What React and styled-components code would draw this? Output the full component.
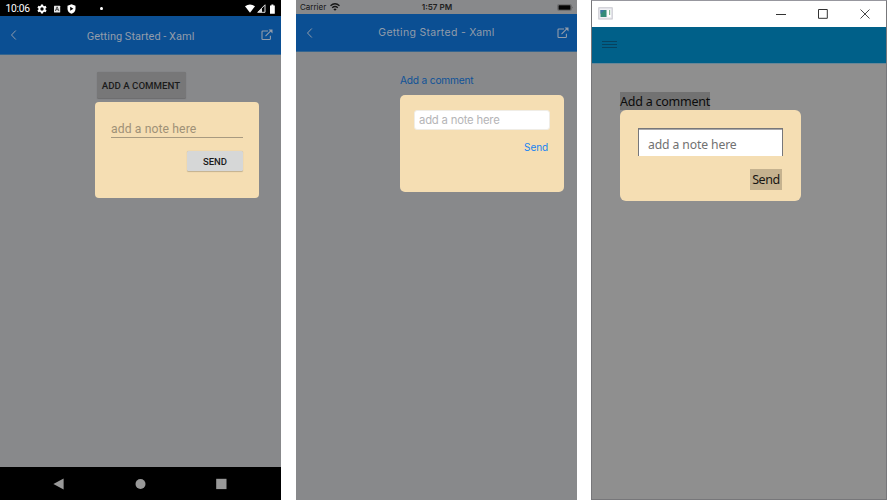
import React from "react";
import styled, { createGlobalStyle } from "styled-components";

const GlobalStyle = createGlobalStyle`
  *, *::before, *::after { box-sizing: border-box; }
  body { margin: 0; background: #fff; overflow: hidden; }
`;

const roboto = `Roboto, sans-serif`;
const inter = `Inter, sans-serif`;
const noto = `"Noto Sans", sans-serif`;

const Stage = styled.main`
  display: flex;
  width: 888px;
  height: 500px;
  background: #fff;
`;

const Phone = styled.section`
  display: flex;
  flex-direction: column;
  width: 281px;
  height: 500px;
  margin-right: ${(p) => p.$gap}px;
  background: #88898b;
  font-family: ${(p) => p.$font};
`;

const Text = styled.span`
  font-size: ${(p) => p.$size}px;
  font-weight: ${(p) => p.$weight || 400};
  letter-spacing: ${(p) => p.$track || 0}px;
  color: ${(p) => p.$color};
  line-height: 1;
  white-space: nowrap;
`;

const Title = styled(Text)`
  padding: 2px 2px 0 0;
`;

const Glyph = styled.svg`
  display: block;
  flex: none;
`;

const AndroidStatus = styled.div`
  display: flex;
  align-items: center;
  height: 16px;
  padding: 1px 4px 0 5.5px;
  background: #000;
`;

const StatusIcons = styled.div`
  display: flex;
  align-items: center;
  gap: ${(p) => p.$gap}px;
  margin-left: ${(p) => p.$left}px;
`;

const Dot = styled.i`
  width: 3px;
  height: 3px;
  margin-left: 24px;
  border-radius: 50%;
  background: #fff;
`;

const AppBar = styled.header`
  display: grid;
  grid-template-columns: 40px 1fr 40px;
  align-items: center;
  height: ${(p) => p.$height}px;
  padding: 0 8px 0 10px;
  background: #0b4f93;
  border-bottom: 1px solid #34658f;
  text-align: center;

  & > :last-child { justify-self: end; }
`;

const Content = styled.div`
  display: flex;
  flex: 1;
  flex-direction: column;
  align-items: flex-start;
  padding: ${(p) => p.$pad};
`;

const RaisedButton = styled.button`
  display: flex;
  align-items: center;
  justify-content: center;
  width: ${(p) => p.$w}px;
  height: ${(p) => p.$h}px;
  margin-left: ${(p) => p.$inset || 0}px;
  padding: 1px 0 0;
  border: 0;
  border-radius: 1.5px;
  background: ${(p) => p.$bg};
  box-shadow: 0 0.5px 1px ${(p) => p.$shadow};
  font-family: inherit;
`;

const LinkButton = styled.button`
  display: flex;
  padding: 0;
  border: 0;
  background: none;
  font-family: inherit;
`;

const Popup = styled.div`
  display: flex;
  flex-direction: column;
  align-items: flex-end;
  width: ${(p) => p.$w}px;
  height: ${(p) => p.$h}px;
  margin-top: ${(p) => p.$top}px;
  padding: ${(p) => p.$pad};
  border-radius: ${(p) => p.$radius}px;
  background: #f5deb3;
`;

const Field = styled.input`
  display: block;
  width: 100%;
  outline: 0;
  font-family: inherit;
  letter-spacing: ${(p) => p.$track}px;
  &::placeholder { color: ${(p) => p.$hint}; opacity: 1; }
`;

const LineField = styled(Field)`
  height: 19px;
  margin-bottom: 13px;
  padding: 1px 0 0;
  border: 0;
  border-bottom: 1px solid #a89a80;
  background: none;
  font-size: 12.2px;
`;

const RoundField = styled(Field)`
  height: 20px;
  margin-bottom: 10px;
  padding: 0 0 0 4px;
  border: 1px solid #f0ede6;
  border-radius: 3px;
  background: #fff;
  font-size: 11.3px;
`;

const BoxField = styled(Field)`
  height: 28px;
  margin-bottom: 13px;
  padding: 3px 0 0 9px;
  border: 1px solid #77777a;
  border-bottom: 0;
  background: #fff;
  box-shadow: inset 0 1px 0 #a8a8ab;
  font-size: 12.2px;
`;

const NavBar = styled.nav`
  display: flex;
  align-items: center;
  height: 33px;
  padding-left: 53px;
  gap: 70.5px;
  background: #000;
`;

const IosStatus = styled.div`
  display: grid;
  grid-template-columns: 1fr auto 1fr;
  align-items: center;
  height: 14px;
  padding: 0 3px 0 4px;
`;

const Carrier = styled.div`
  display: flex;
  align-items: center;
  gap: 4px;
`;

const Battery = styled(Glyph)`
  justify-self: end;
`;

const Window = styled.section`
  display: flex;
  flex-direction: column;
  width: 296px;
  height: 500px;
  border: 1px solid #77777a;
  border-top-color: #97979e;
  background: #8f8f8f;
  font-family: ${noto};
`;

const TitleBar = styled.div`
  display: flex;
  align-items: center;
  justify-content: space-between;
  height: 26px;
  padding: 0 16px 1px 6px;
  background: #fff;
`;

const Controls = styled.div`
  display: flex;
  align-items: center;
  gap: 32px;
`;

const MenuBar = styled.header`
  display: flex;
  align-items: center;
  height: 37px;
  padding: 0 0 1px 10px;
  background: #006089;
  border-bottom: 1px solid #698696;
`;

const Tag = styled.button`
  display: flex;
  align-items: center;
  justify-content: center;
  width: ${(p) => p.$w}px;
  height: ${(p) => p.$h}px;
  margin-right: ${(p) => p.$inset || 0}px;
  padding: 2px 0 0;
  border: 0;
  background: ${(p) => p.$bg};
  font-family: inherit;
`;

const Back = () => (
  <Glyph width="8" height="12" viewBox="0 0 8 12" fill="none" stroke="#929caa" strokeWidth="1">
    <path d="M5.8 1.5 1.5 6l4.3 4.5" />
  </Glyph>
);

const External = () => (
  <Glyph width="12" height="12" viewBox="0 0 12 12" fill="none" stroke="#929caa" strokeWidth="1.1">
    <path d="M7 2H1.8Q1 2 1 2.8v6.9q0 .8.8.8h6.8q.8 0 .8-.8V6.8M4.5 7.2 10 1.7" />
    <path d="M7.6.5h3.9v3.9z" fill="#929caa" stroke="none" />
  </Glyph>
);

const Gear = () => (
  <Glyph width="10" height="10" viewBox="0 0 24 24" fill="#fff">
    <path
      fillRule="evenodd"
      d="M9.5 1h5l.6 3.3 2.2 1.3 3.2-1.2 2.5 4.3L20.4 11v2l2.6 2.3-2.5 4.3-3.2-1.2-2.2 1.3-.6 3.3h-5l-.6-3.3-2.2-1.3-3.2 1.2L1 15.3 3.6 13v-2L1 8.7l2.5-4.3 3.2 1.2 2.2-1.3zM12 8a4 4 0 1 0 0 8 4 4 0 0 0 0-8z"
    />
  </Glyph>
);

const Badge = () => (
  <Glyph width="8" height="8" viewBox="0 0 8 8">
    <rect x="1" y=".7" width="6.2" height="6.7" rx=".5" fill="#e8e8e8" />
    <path d="m2.3 6 1.8-4.2L5.9 6M3 4.7h2.2" fill="none" stroke="#333" strokeWidth=".8" />
  </Glyph>
);

const Shield = () => (
  <Glyph width="9" height="10" viewBox="0 0 9 10">
    <path d="M4.5.3 8.5 1.7v3.2c0 2.2-1.6 4-4 4.9-2.4-.9-4-2.7-4-4.9V1.7z" fill="#fff" />
    <path d="M3.2 2.8 6.4 4.8 3.2 6.8z" fill="#000" />
  </Glyph>
);

export default function App() {
  return (
    <>
      <GlobalStyle />
      <Stage>
        <Phone $gap={15} $font={roboto}>
          <AndroidStatus>
            <Title $size={10.3} $color="#fff" $track={-0.25}>10:06</Title>
            <StatusIcons $left={5} $gap={6}>
              <Gear />
              <Badge />
              <Shield />
            </StatusIcons>
            <Dot />
            <StatusIcons $left={142.5} $gap={2}>
              <Glyph width="10" height="9" viewBox="0 0 10 9">
                <path d="M0 2.3Q5-1.5 10 2.3L5 8.7z" fill="#fff" />
              </Glyph>
              <Glyph width="9" height="9" viewBox="0 0 9 9">
                <path d="M.7 8.3 8 .8v7.5z" fill="none" stroke="#ddd" />
                <path d="M.7 8.3 5 4v4.3z" fill="#ddd" />
              </Glyph>
              <Glyph width="9" height="10" viewBox="0 0 9 10">
                <path d="M2 1.5h1.4V.5h2v1h1.4v8.2H2z" fill="#fff" />
              </Glyph>
            </StatusIcons>
          </AndroidStatus>
          <AppBar $height={39}>
            <Back />
            <Title $size={11} $color="#929caa">Getting Started - Xaml</Title>
            <External />
          </AppBar>
          <Content $pad="17px 0 0 95px">
            <RaisedButton $w={89} $h={26} $inset={1.5} $bg="#777778" $shadow="#6c6c6d">
              <Text $size={9.7} $weight={500} $color="#1b1b1b">ADD A COMMENT</Text>
            </RaisedButton>
            <Popup $w={164} $h={96} $top={4} $radius={4} $pad="17px 16px 0">
              <LineField placeholder="add a note here" $hint="#9f9177" $track={0.1} />
              <RaisedButton $w={56} $h={20} $bg="#d6d7d7" $shadow="#c2b18f">
                <Text $size={9.5} $weight={500} $color="#1b1b1b">SEND</Text>
              </RaisedButton>
            </Popup>
          </Content>
          <NavBar>
            <Glyph width="11" height="12" viewBox="0 0 11 12"><path d="M.4 6 10.6.4v11.2z" fill="#999" /></Glyph>
            <Glyph width="11" height="12" viewBox="0 0 11 12"><circle cx="5.5" cy="6" r="5" fill="#999" /></Glyph>
            <Glyph width="11" height="12" viewBox="0 0 11 12"><rect x=".2" y=".8" width="10.3" height="10.3" fill="#999" /></Glyph>
          </NavBar>
        </Phone>

        <Phone $gap={14} $font={inter}>
          <IosStatus>
            <Carrier>
              <Text $size={8} $color="#151515">Carrier</Text>
              <Glyph width="10" height="8" viewBox="0 0 10 8" fill="none" stroke="#151515" strokeWidth="1.4">
                <path d="M.5 2.8Q5-1.2 9.5 2.8M2.2 4.8Q5 2.4 7.8 4.8" />
                <path d="m3.4 6.2 1.6 1.6 1.6-1.6Q5 4.9 3.4 6.2z" fill="#151515" stroke="none" />
              </Glyph>
            </Carrier>
            <Text $size={8.1} $weight={600} $color="#202020">1:57 PM</Text>
            <Battery width="17" height="7" viewBox="0 0 17 7">
              <rect x=".5" y=".5" width="14" height="6" rx="1.2" fill="none" stroke="#666" strokeWidth=".7" />
              <rect x="1.5" y="1.3" width="12" height="4.4" rx=".5" fill="#050505" />
              <path d="M15.5 2.4q1 .9 0 2.1z" fill="#444" />
            </Battery>
          </IosStatus>
          <AppBar $height={38}>
            <Back />
            <Title $size={10.5} $color="#929caa" $track={0.3}>Getting Started - Xaml</Title>
            <External />
          </AppBar>
          <Content $pad="23px 0 0 104px">
            <LinkButton><Text $size={10.2} $color="#0f5298" $track={-0.2}>Add a comment</Text></LinkButton>
            <Popup $w={164} $h={96.5} $top={10} $radius={5} $pad="14.5px 14px 0">
              <RoundField placeholder="add a note here" $hint="#b5b5b7" $track={-0.2} />
              <LinkButton><Title $size={10} $color="#1784f2" $track={-0.1}>Send</Title></LinkButton>
            </Popup>
          </Content>
        </Phone>

        <Window>
          <TitleBar>
            <Glyph width="15" height="13" viewBox="0 0 15 13">
              <rect x=".8" y=".8" width="13.4" height="11.2" fill="#f0f0f4" stroke="#c4c4cb" />
              <rect x="2.5" y="3" width="6" height="7" fill="#348b78" />
              <path d="M2.5 3h4.2L2.5 7z" fill="#3d77a3" />
              <rect x="9.4" y="3" width="3.5" height="7" fill="#fff" />
              <rect x="11" y="3" width="1.2" height="5" fill="#84b693" />
            </Glyph>
            <Controls>
              <Glyph width="10" height="10" viewBox="0 0 10 10"><path d="M0 5.5h10" stroke="#333" /></Glyph>
              <Glyph width="10" height="10" viewBox="0 0 10 10"><path d="M.5.5h8.8v8.8H.5z" fill="none" stroke="#333" /></Glyph>
              <Glyph width="10" height="10" viewBox="0 0 10 10"><path d="m.5.5 9 9m0-9-9 9" stroke="#333" strokeWidth=".9" /></Glyph>
            </Controls>
          </TitleBar>
          <MenuBar>
            <Glyph width="15" height="9" viewBox="0 0 15 9"><path d="M0 1.5h15M0 4.5h15M0 7.5h15" stroke="#07425f" /></Glyph>
          </MenuBar>
          <Content $pad="28px 0 0 28px">
            <Tag $w={90} $h={18} $bg="#727272">
              <Text $size={12.5} $color="#0b0b0b" $track={-0.25}>Add a comment</Text>
            </Tag>
            <Popup $w={181} $h={91} $top={0} $radius={6} $pad="18px 18px 0">
              <BoxField placeholder="add a note here" $hint="#717171" $track={-0.12} />
              <Tag $w={32} $h={21} $inset={1} $bg="#c5b28f">
                <Text $size={12.5} $color="#171512" $track={-0.4}>Send</Text>
              </Tag>
            </Popup>
          </Content>
        </Window>
      </Stage>
    </>
  );
}
